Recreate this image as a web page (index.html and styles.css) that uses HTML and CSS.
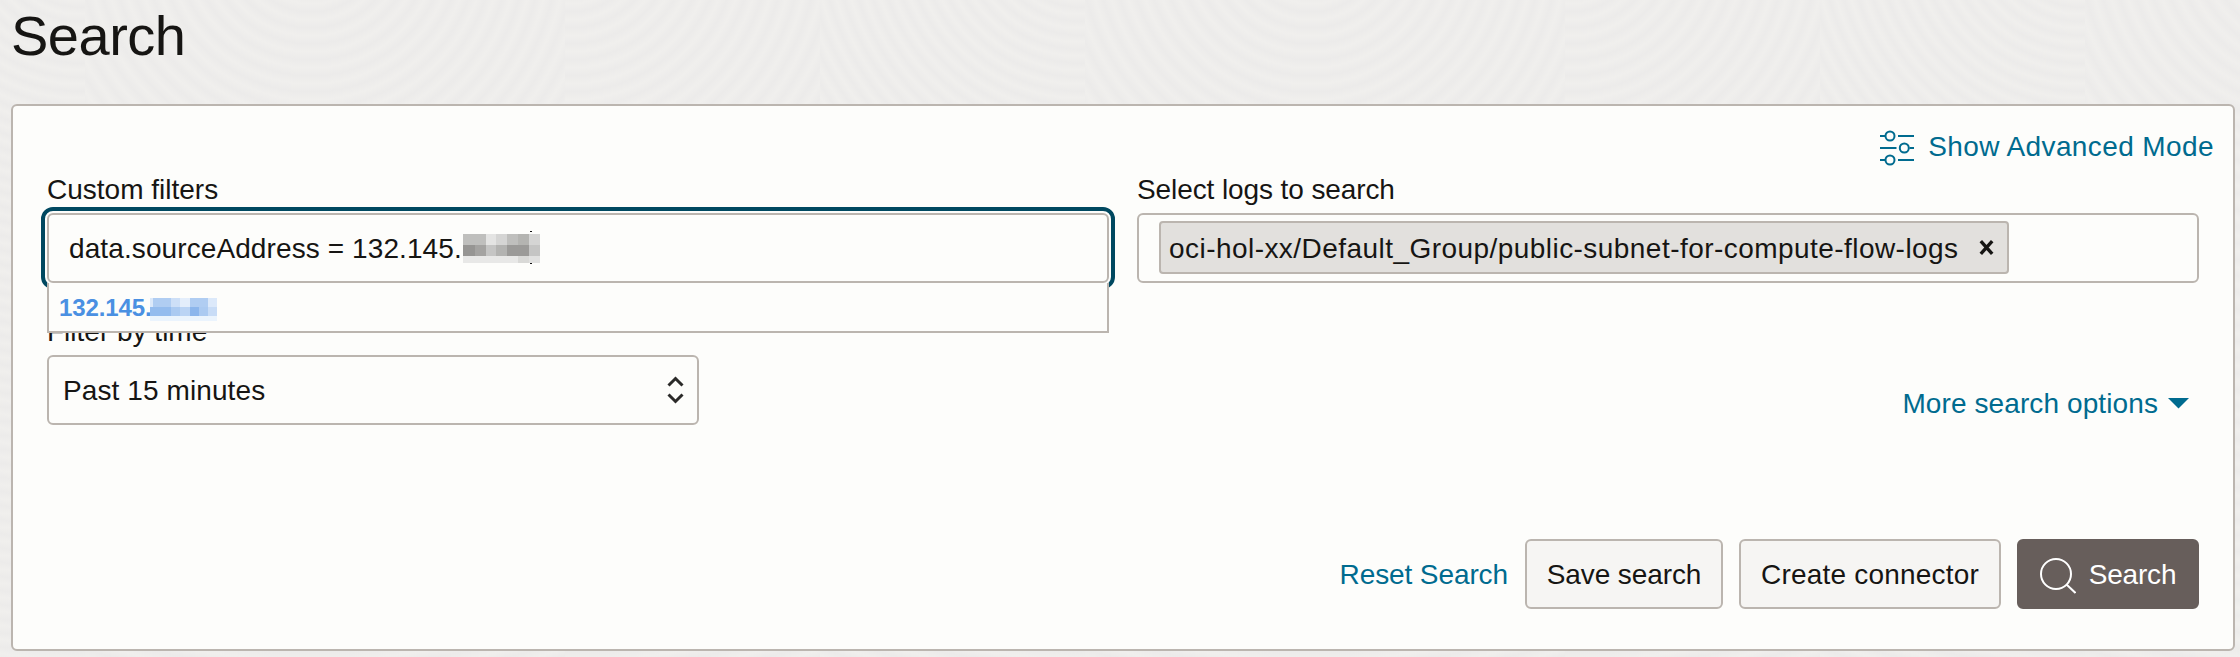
FILE: index.html
```html
<!DOCTYPE html>
<html lang="en">
<head>
<meta charset="utf-8">
<title>Search</title>
<link rel="stylesheet" href="styles.css">
</head>
<body>
<svg class="backdrop" width="2240" height="657" aria-hidden="true">
  <defs>
    <radialGradient id="ring-a" gradientUnits="userSpaceOnUse" cx="226" cy="-60" r="16" spreadMethod="repeat">
      <stop offset="0" stop-color="#f0efed"/><stop offset=".5" stop-color="#ecebea"/><stop offset="1" stop-color="#f0efed"/>
    </radialGradient>
    <radialGradient id="ring-b" gradientUnits="userSpaceOnUse" cx="485" cy="-60" r="16" spreadMethod="repeat">
      <stop offset="0" stop-color="#f0efed"/><stop offset=".5" stop-color="#ecebea"/><stop offset="1" stop-color="#f0efed"/>
    </radialGradient>
    <radialGradient id="ring-c" gradientUnits="userSpaceOnUse" cx="994" cy="-70" r="14" spreadMethod="repeat">
      <stop offset="0" stop-color="#f0efed"/><stop offset=".5" stop-color="#ecebea"/><stop offset="1" stop-color="#f0efed"/>
    </radialGradient>
    <pattern id="waves" patternUnits="userSpaceOnUse" x="85" y="0" width="1000" height="657">
      <rect width="480" height="657" fill="url(#ring-a)"/>
      <rect x="480" width="255" height="657" fill="url(#ring-b)"/>
      <rect x="735" width="265" height="657" fill="url(#ring-c)"/>
    </pattern>
  </defs>
  <rect width="2240" height="657" fill="url(#waves)"/>
</svg>

<main class="page">
  <h1 class="title">Search</h1>

  <section class="panel">
    <div class="mode-row">
      <a class="link mode-link">
        <svg class="sliders" width="34" height="36" viewBox="0 0 34 36" fill="none" stroke="currentColor" stroke-width="2">
          <path d="M0 6h5.5M18 6h16M0 18h16.5M29.5 18H34M0 30h5.5M18 30h16"/>
          <ellipse cx="10" cy="6" rx="4.5" ry="4.6"/>
          <ellipse cx="24.3" cy="18" rx="4.5" ry="4.6"/>
          <ellipse cx="10" cy="30" rx="4.5" ry="4.6"/>
        </svg>
        <span class="mode-text">Show Advanced Mode</span>
      </a>
    </div>

    <div class="filters">
      <div class="field">
        <label class="label">Custom filters</label>
        <div class="box box-focus">
          <span class="query">data.sourceAddress = 132.145.</span>
          <svg class="mask" width="79" height="34" viewBox="0 0 79 34" shape-rendering="crispEdges">
            <path fill="#111" d="M68 0h2v1h-2zM68 32h2v1h-2z"/>
            <path fill="#bfbfbd" d="M1 3h23v11H1zM45 3h23v11H45z"/>
            <path fill="#e4e4e3" d="M24 3h10v11H24z"/>
            <path fill="#d5d5d4" d="M34 3h11v11H34zM67 3h11v11H67z"/>
            <path fill="#b4b4b1" d="M56 3h11v11H56z"/>
            <path fill="#969593" d="M1 14h12v11H1z"/>
            <path fill="#a4a3a1" d="M13 14h11v11H13z"/>
            <path fill="#c5c5c4" d="M24 14h10v11H24zM67 14h11v11H67z"/>
            <path fill="#b3b3b1" d="M34 14h11v11H34z"/>
            <path fill="#9b9a98" d="M45 14h22v11H45z"/>
            <path fill="#e8e8e7" d="M1 25h55v7H1z"/>
            <path fill="#d9d9d7" d="M56 25h11v7H56z"/>
            <path fill="#e1e1e0" d="M67 25h11v7H67z"/>
          </svg>
          <div class="suggestions">
            <span class="suggestion">132.145.</span>
            <svg class="mask-blue" width="67" height="24" viewBox="0 0 67 24" shape-rendering="crispEdges">
              <path fill="#dce9fa" d="M0 0h3v9H0zM58 0h9v9h-9z"/>
              <path fill="#b0cdf2" d="M3 0h18v9H3zM40 0h18v9H40z"/>
              <path fill="#cddff7" d="M21 0h9v9h-9z"/>
              <path fill="#e4eefb" d="M30 0h10v9H30z"/>
              <path fill="#94bcee" d="M0 9h21v9H0z"/>
              <path fill="#abcaf1" d="M21 9h9v9h-9zM49 9h9v9h-9z"/>
              <path fill="#bbd4f4" d="M30 9h10v9H30z"/>
              <path fill="#8cb6ec" d="M40 9h9v9h-9z"/>
              <path fill="#c8dcf6" d="M58 9h9v9h-9z"/>
              <path fill="#ebf4fd" d="M0 18h67v5H0z"/>
            </svg>
          </div>
        </div>
      </div>
      <div class="field">
        <label class="label label-logs">Select logs to search</label>
        <div class="box box-logs">
          <span class="tag">
            <span class="tag-text">oci-hol-xx/Default_Group/public-subnet-for-compute-flow-logs</span>
            <svg class="tag-close" width="15" height="15" viewBox="0 0 15 15" fill="none" stroke="#161513" stroke-width="3.4"><path d="M1.8 1.200l11.400 12.600M13.200 1.200L1.800 13.800"/></svg>
          </span>
        </div>
      </div>
    </div>

    <div class="time-row">
      <div class="field field-time">
        <label class="label">Filter by time</label>
        <div class="box box-select">
          <span class="select-value">Past 15 minutes</span>
          <svg width="17" height="30" viewBox="0 0 17 30" fill="none" stroke="#2b2a29" stroke-width="3"><path d="M1.500 10.500l7-7 7 7M1.500 19.500l7 7 7-7"/></svg>
        </div>
      </div>
      <a class="link more">
        <span class="more-text">More search options</span>
        <svg width="21" height="11" viewBox="0 0 21 11" fill="currentColor"><path d="M0 0h21L10.500 10.500z"/></svg>
      </a>
    </div>

    <div class="actions">
      <a class="link reset"><span class="btn-text">Reset Search</span></a>
      <button class="btn btn-save"><span class="btn-text">Save search</span></button>
      <button class="btn btn-create"><span class="btn-text">Create connector</span></button>
      <button class="btn btn-search">
        <svg width="36" height="36" viewBox="0 0 36 36" fill="none" stroke="#fff" stroke-width="2"><circle cx="16" cy="16" r="15"/><path d="M26.500 26.500l9 8.500"/></svg>
        <span class="btn-text">Search</span>
      </button>
    </div>
  </section>
</main>
</body>
</html>
```
FILE: styles.css
```css
* { box-sizing: border-box; }

body {
  margin: 0;
  height: 657px;
  overflow: hidden;
  background: #f0efed;
  color: #161513;
  font: 28px/32px "Liberation Sans", Arial, sans-serif;
}

svg { display: block; flex: none; }

.backdrop { position: absolute; inset: 0; z-index: -1; }

.page { padding: 4px 5px 0 11px; }

.title {
  margin: 0 0 36px;
  font-size: 56px;
  line-height: 64px;
  font-weight: 400;
  letter-spacing: -0.5px;
}

.panel {
  height: 547px;
  padding: 24px 0 0 34px;
  border: 2px solid #bbb5af;
  border-radius: 6px;
  background: #fdfdfb;
}

.link { display: flex; align-items: center; color: #006b8f; white-space: nowrap; }

.mode-row { display: flex; justify-content: flex-end; height: 32px; padding-right: 19px; }
.mode-link { gap: 14px; }
.sliders { margin-top: 4px; }
.mode-text { padding-top: 2px; letter-spacing: 0.4px; }

.filters {
  display: grid;
  grid-template-columns: 1062px 1062px;
  gap: 28px;
  margin-top: 11px;
}

.field { display: flex; flex-direction: column; gap: 8px; }
.label { height: 32px; padding-top: 1px; }
.label-logs { letter-spacing: -0.1px; }

.box {
  display: flex;
  align-items: center;
  height: 70px;
  border: 2px solid #bbb5af;
  border-radius: 6px;
  background: #fdfdfb;
  white-space: nowrap;
}

.box-focus {
  position: relative;
  padding-left: 20px;
  outline: 4px solid #004860;
  outline-offset: 2px;
}

.query { width: 393px; padding-top: 2px; letter-spacing: 0.1px; }

.suggestions {
  position: absolute;
  top: 68px;
  left: -2px;
  right: -2px;
  display: flex;
  align-items: flex-start;
  height: 50px;
  padding: 12px 0 0 10px;
  border: 2px solid #bbb5af;
  border-top: 0;
  background: #fdfdfb;
  z-index: 1;
}

/* the field's lower border stays visible above the list */
.suggestions::before {
  content: "";
  position: absolute;
  top: -2px;
  left: -2px;
  right: -2px;
  height: 2px;
  margin: 0 6px;
  background: #bbb5af;
}

.suggestion {
  width: 91px;
  margin-top: -1px;
  color: #4a90e2;
  font-size: 24px;
  line-height: 28px;
  font-weight: 700;
  letter-spacing: -0.1px;
}
.mask-blue { margin-top: 3px; }

.box-logs { padding-left: 20px; }

.tag {
  display: flex;
  align-items: center;
  width: 850px;
  height: 53px;
  margin-top: -1px;
  padding-left: 8px;
  border: 2px solid #bbb5af;
  border-radius: 4px;
  background: #e2e0dd;
}
.tag-text { width: 810px; padding-top: 2px; letter-spacing: 0.45px; }

.time-row { display: flex; justify-content: space-between; align-items: flex-end; margin-top: 32px; padding-right: 34px; }
.field-time { width: 652px; }
.box-select { justify-content: space-between; padding: 0 13px 0 14px; }
.select-value { padding-top: 2px; letter-spacing: 0.1px; }
.more { gap: 10px; padding: 0 10px 7px 0; }
.more-text { margin-bottom: -2px; letter-spacing: 0.1px; }

.actions { display: flex; align-items: center; justify-content: flex-end; margin-top: 114px; padding-right: 34px; }
.reset { margin-right: 17px; letter-spacing: -0.1px; }

.btn {
  display: flex;
  align-items: center;
  justify-content: center;
  height: 70px;
  padding: 0;
  border: 2px solid #bbb5af;
  border-radius: 6px;
  background: #f6f5f3;
  color: #161513;
  font: inherit;
}
.btn-text { padding-top: 2px; }
.btn-save { width: 198px; margin-right: 16px; letter-spacing: -0.1px; }
.btn-create { width: 262px; margin-right: 16px; letter-spacing: 0.2px; }
.btn-search {
  width: 182px;
  gap: 13px;
  border-color: #675e5b;
  background: #675e5b;
  color: #fff;
  letter-spacing: -0.2px;
}
.btn-search svg { margin-top: 4px; }
```
